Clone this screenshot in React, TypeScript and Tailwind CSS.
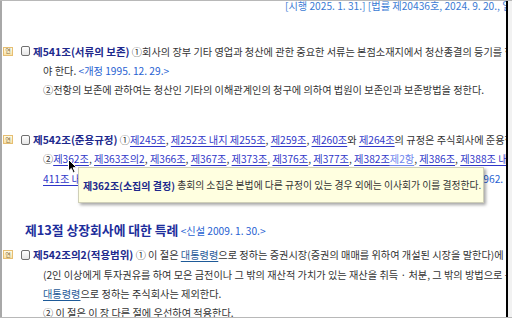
import React from "react";

function Badge() {
  return (
    <span className="inline-flex items-center justify-center w-[10px] h-[9px] border border-[#e6be72] bg-gradient-to-b from-[#fffbe6] to-[#f8e2a8] text-[6px] leading-none text-[#8a7448] shrink-0">
      연
    </span>
  );
}

function Check() {
  return (
    <span className="inline-block w-[9px] h-[10px] rounded-[2px] border border-[#707070] bg-gradient-to-b from-white to-[#e6e6e6] shrink-0" />
  );
}

function L({ children }: { children: React.ReactNode }) {
  return <span className="text-[#2f36c8] underline underline-offset-[2px] decoration-[1px]">{children}</span>;
}

function L2({ children }: { children: React.ReactNode }) {
  return <span className="text-[#6f86ee] underline underline-offset-[2px] decoration-[1px]">{children}</span>;
}

function Title({ children }: { children: React.ReactNode }) {
  return <span className="font-bold text-[#20288c] text-[10.5px]">{children}</span>;
}

function FirstLine({ title, children }: { title: string; children: React.ReactNode }) {
  return (
    <div className="flex items-center h-[19.4px] leading-[19.4px] whitespace-nowrap">
      <span className="ml-[1px] flex items-center">
        <Badge />
      </span>
      <span className="ml-[8px] flex items-center">
        <Check />
      </span>
      <span className="ml-[3px]">
        <Title>{title}</Title> {children}
      </span>
    </div>
  );
}

function Line({ children }: { children: React.ReactNode }) {
  return <div className="h-[19.4px] leading-[19.4px] whitespace-nowrap pl-[41px]">{children}</div>;
}

export default function App() {
  return (
    <div className="w-[512px] h-[320px] bg-white overflow-hidden relative font-['Noto_Sans_CJK_KR',sans-serif] text-[10.2px] text-[#333]">
      <div className="flex h-[318px] border-t border-b border-[#b8b8b8]">
        <div className="flex-1 min-w-0 overflow-hidden border-l-2 border-[#a8a8a8] flex flex-col">
          <div className="h-[9px] leading-[9px] whitespace-nowrap pl-[283px] text-[#3b7bd4]">
            [시행 2025. 1. 31.] [법률 제20436호, 2024. 9. 20., 일부개정]
          </div>

          <div className="mt-[31.5px]">
            <FirstLine title="제541조(서류의 보존)">
              ①회사의 장부 기타 영업과 청산에 관한 중요한 서류는 본점소재지에서 청산종결의 등기를 한 후 10년간 이를 보존하여
            </FirstLine>
            <Line>
              야 한다. <span className="text-[#2862d2]">&lt;개정 1995. 12. 29.&gt;</span>
            </Line>
            <Line>②전항의 보존에 관하여는 청산인 기타의 이해관계인의 청구에 의하여 법원이 보존인과 보존방법을 정한다.</Line>
          </div>

          <div className="mt-[30.3px]">
            <FirstLine title="제542조(준용규정)">
              ①<L>제245조</L>, <L>제252조 내지 제255조</L>, <L>제259조</L>, <L>제260조</L>와 <L>제264조</L>의 규정은 주식회사에 준용한다.
            </FirstLine>
            <Line>
              ②<L>제362조</L>, <L>제363조의2</L>, <L>제366조</L>, <L>제367조</L>, <L>제373조</L>, <L>제376조</L>, <L>제377조</L>, <L>제382조</L>
              <L2>제2항</L2>, <L>제386조</L>, <L>제388조 내지 제399조</L>, <L>제401조 내지 제</L>
            </Line>
            <div className="h-[19.4px] leading-[19.4px] whitespace-nowrap pl-[41px] flex">
              <span className="w-[408px] overflow-hidden shrink-0">
                <L>411조 내지 제413조</L>, <L>제415조</L>, <L>제415조의2</L>, <L>제542조</L>의 규정은 청산인에 준용한다.
              </span>
              <span className="text-[#2862d2]">&lt;개정 1962. 12. 12., 1984. 4. 10.&gt;</span>
            </div>
          </div>

          <div className="mt-[32.3px] h-[19px] leading-[19px] whitespace-nowrap pl-[23px]">
            <span className="text-[12.8px] font-bold text-[#1e2e9c]">제13절 상장회사에 대한 특례</span>{" "}
            <span className="text-[#2862d2]">&lt;신설 2009. 1. 30.&gt;</span>
          </div>

          <div className="mt-[5.8px]">
            <FirstLine title="제542조의2(적용범위)">
              ① 이 절은 <span className="text-[#1e5a98] underline underline-offset-[2px]">대통령령</span>으로 정하는 증권시장(증권의 매매를 위하여 개설된 시장을 말한다)에 상장된 주권을 발행한 주식회사
            </FirstLine>
            <Line>(2인 이상에게 투자권유를 하여 모은 금전이나 그 밖의 재산적 가치가 있는 재산을 취득 · 처분, 그 밖의 방법으로 운용하고</Line>
            <Line>
              <span className="text-[#1e5a98] underline underline-offset-[2px]">대통령령</span>으로 정하는 주식회사는 제외한다.
            </Line>
            <Line>② 이 절은 이 장 다른 절에 우선하여 적용한다.</Line>
          </div>
        </div>
        <div className="w-[2px] bg-black shrink-0" />
        <div className="w-[4px] bg-[#f2f2f2] shrink-0" />
      </div>

      {/* tooltip */}
      <div className="absolute left-[78px] top-[167px] w-[406px] h-[36px] bg-[#ffffe0] border border-[#cfcfb8] shadow-[2px_2px_3px_rgba(0,0,0,0.35)] flex items-center pl-[4px] whitespace-nowrap text-[9.8px]">
        <span className="font-bold text-[#20288c] text-[10px]">제362조(소집의 결정)</span>
        <span>&nbsp;총회의 소집은 본법에 다른 규정이 있는 경우 외에는 이사회가 이를 결정한다.</span>
      </div>

      {/* cursor */}
      <svg className="absolute left-[68px] top-[159px]" width="10" height="15" viewBox="0 0 10 15">
        <path d="M0.5 0.5 L0.5 12 L3.3 9.4 L5.4 14 L7.2 13.2 L5.1 8.7 L8.8 8.7 Z" fill="#000" stroke="#fff" strokeWidth="1" />
      </svg>
    </div>
  );
}
